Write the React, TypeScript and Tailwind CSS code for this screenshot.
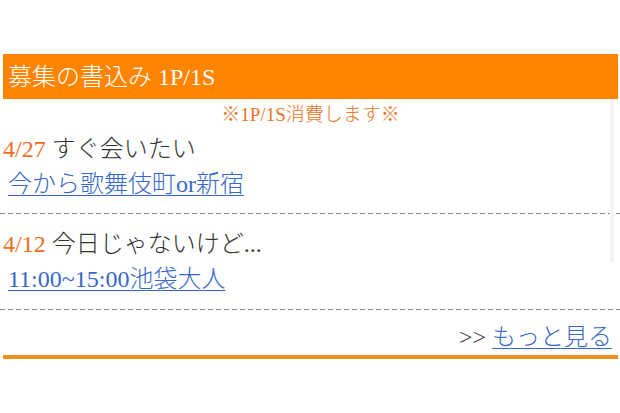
import React from 'react';

type Post = { date: string; title: string; body: string };

const POSTS: Post[] = [
  { date: '4/27', title: 'すぐ会いたい', body: '今から歌舞伎町or新宿' },
  { date: '4/12', title: '今日じゃないけど...', body: '11:00~15:00池袋大人' },
];

const FONT = "font-['Liberation_Serif','Noto_Sans_CJK_JP',serif]";

function Dashed() {
  return <div className="h-px w-full bg-[repeating-linear-gradient(to_right,#8a8a8a_0_5px,transparent_5px_8px)]" />;
}

export default function App() {
  return (
    <div className={`w-full min-h-[413px] bg-white pt-[54px] ${FONT} font-light`}>
      {/* ヘッダー */}
      <div className="ml-[3px] mr-[2px] h-[45px] bg-[#ff8400] flex items-center pl-[5px]">
        <h2 className="text-[24px] leading-none text-white">募集の書込み 1P/1S</h2>
      </div>

      <div className="relative">
        {/* 右側のスクロール帯 */}
        <div className="absolute right-[6px] top-0 w-[4px] h-[164px] bg-[#f4f4f4]" />

        <p className="h-[33px] pl-[3px] pr-[2px] flex items-center justify-center text-[19px] text-[#ea7426]">
          ※1P/1S消費します※
        </p>

        {POSTS.map((p, i) => (
          <div key={p.date}>
            <div className={`pl-[3px] ${i === 0 ? 'pb-[11px]' : 'pt-[13px] pb-[12px]'}`}>
              <div className="text-[24px] leading-[35px] text-[#333]">
                <span className="text-[#ee6f1e]">{p.date}</span> {p.title}
              </div>
              <div className="pl-[5px] text-[24px] leading-[35px]">
                <a href="#" className="text-[#3868c8] underline underline-offset-[3px] decoration-1">
                  {p.body}
                </a>
              </div>
            </div>
            <Dashed />
          </div>
        ))}

        <div className="mt-[10px] ml-[3px] mr-[2px] h-[39px] border-b-4 border-[#f39020] flex justify-end pr-[6px] text-[24px] leading-[35px] text-[#444]">
          <span>
            &gt;&gt;{' '}
            <a href="#" className="text-[#3868c8] underline underline-offset-[3px] decoration-1">
              もっと見る
            </a>
          </span>
        </div>
      </div>
    </div>
  );
}
